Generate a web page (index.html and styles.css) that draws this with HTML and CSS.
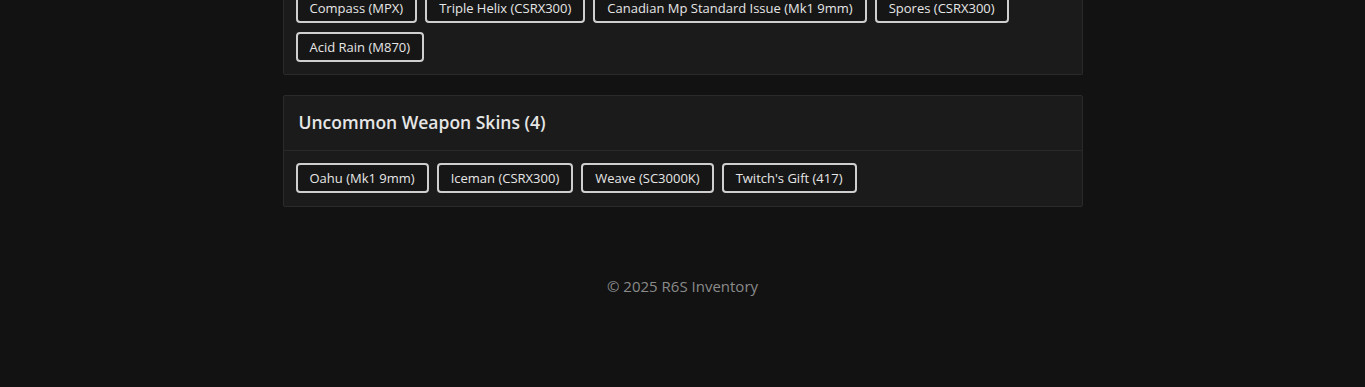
FILE: index.html
```html
<!DOCTYPE html>
<html>
<head>
<meta charset="utf-8">
<link rel="stylesheet" href="styles.css">
</head>
<body>
<main class="container">
  <section class="card card-cut">
    <div class="card-body">
      <span class="tag">Compass (MPX)</span>
      <span class="tag">Triple Helix (CSRX300)</span>
      <span class="tag">Canadian Mp Standard Issue (Mk1 9mm)</span>
      <span class="tag">Spores (CSRX300)</span>
      <span class="tag">Acid Rain (M870)</span>
    </div>
  </section>
  <section class="card">
    <div class="card-header">Uncommon Weapon Skins (4)</div>
    <div class="card-body card-body-last">
      <span class="tag">Oahu (Mk1 9mm)</span>
      <span class="tag">Iceman (CSRX300)</span>
      <span class="tag">Weave (SC3000K)</span>
      <span class="tag">Twitch's Gift (417)</span>
    </div>
  </section>
</main>
<footer class="footer">© 2025 R6S Inventory</footer>
</body>
</html>
```
FILE: styles.css
```css
html, body {
  margin: 0;
  padding: 0;
  background: #121212;
  color: #e6e6e6;
  font-family: "Open Sans", "Liberation Sans", sans-serif;
  overflow: hidden;
}
.container {
  width: 800px;
  margin: 0 auto;
  display: flex;
  flex-direction: column;
  gap: 20px;
}
.card {
  background: #1b1b1b;
  border: 1px solid #2a2a2a;
  border-radius: 2px;
}
.card-cut {
  margin-top: -19px;
  border-top: none;
}
.card-header {
  padding: 15px 15px 17px;
  font-size: 17.5px;
  font-weight: 600;
  line-height: 22px;
  color: #e6e6e6;
  border-bottom: 1px solid #2a2a2a;
}
.card-body {
  padding: 12px;
  display: flex;
  flex-wrap: wrap;
  gap: 9px 8px;
}
.card-body-last {
  padding-bottom: 13px;
}
.tag {
  display: inline-block;
  border: 2px solid #cfcfcf;
  border-radius: 4px;
  padding: 0 12px;
  height: 26px;
  line-height: 26px;
  font-size: 13px;
  color: #e6e6e6;
  background: #161616;
}
.footer {
  margin-top: 69px;
  text-align: center;
  font-size: 15px;
  color: #8a8a8a;
}
```
